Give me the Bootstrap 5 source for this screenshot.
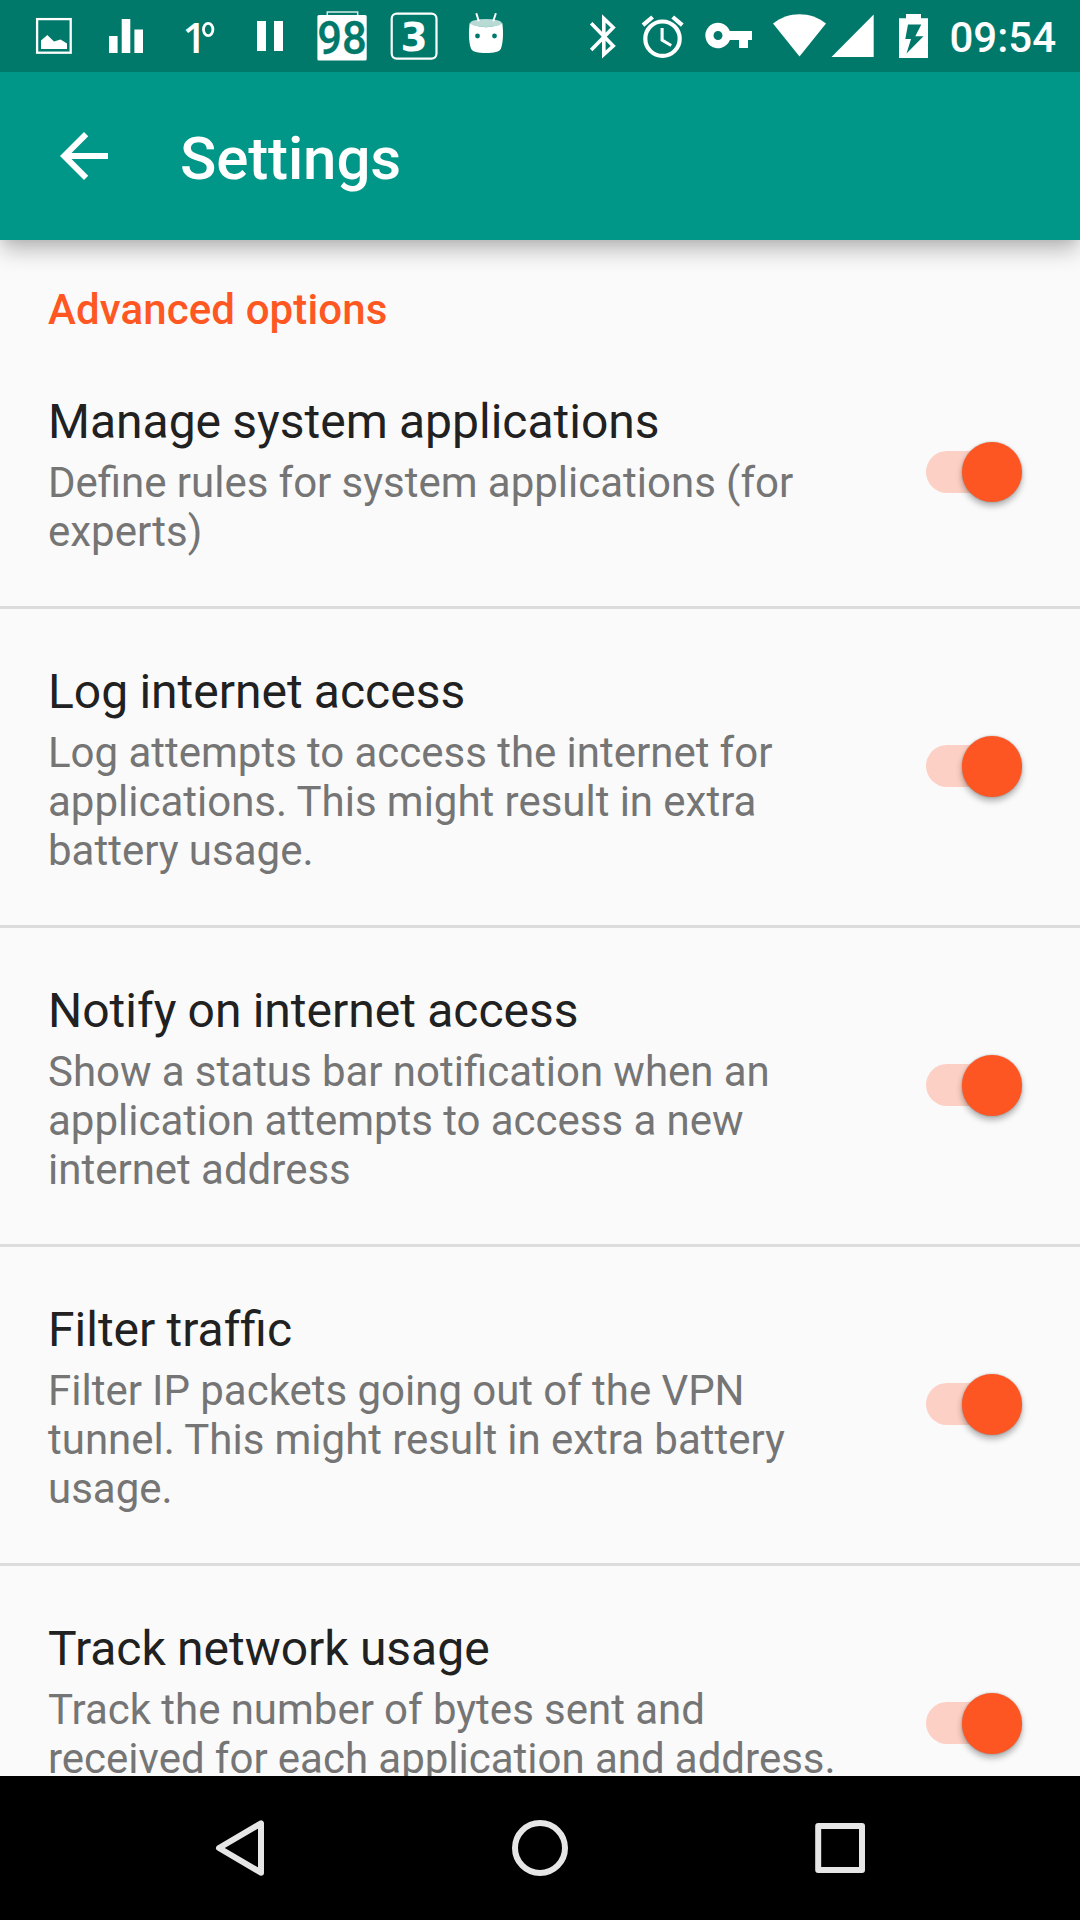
<!DOCTYPE html>
<html lang="en">
<head>
<meta charset="utf-8">
<meta name="viewport" content="width=device-width, initial-scale=1">
<title>Settings</title>
<link href="https://cdn.jsdelivr.net/npm/bootstrap@5.3.0/dist/css/bootstrap.min.css" rel="stylesheet">
<style>
  body { font-family: Roboto, "Noto Sans", sans-serif; background: #fafafa; color: #212121; }
  .screen { width: 1080px; height: 1920px; }
  .status-bar { height: 72px; background: #00796b; padding-left: 18px; padding-right: 24px; }
  .clock { width: 114px; height: 72px; font-size: 42px; font-weight: 500; line-height: 72px; padding-top: 2px; }
  .app-bar { height: 168px; background: #009688; padding-left: 48px; }
  .app-title { font-size: 60px; font-weight: 500; line-height: 70px; letter-spacing: -.12px; margin-left: 60px; padding-top: 5px; }
  .prefs { position: relative; }
  .bar-shadow { position: absolute; top: 0; left: 0; right: 0; height: 60px; overflow: hidden; }
  .bar-shadow::before { content: ""; position: absolute; left: 2px; right: 2px; top: -60px; height: 60px; box-shadow: 0 10px 22px rgba(0,0,0,.26), 0 3px 9px rgba(0,0,0,.06); }
  .section-title { font-size: 42px; font-weight: 500; line-height: 50px; letter-spacing: .12px; color: #ff5722; padding: 45px 48px 4px; height: 99px; }
  .pref { padding: 55px 88px 47px 48px; border-bottom: 3px solid #dcdcdc; }
  .pref-title { font-size: 48px; line-height: 56px; height: 58px; word-spacing: -.7px; }
  .pref-note { font-size: 42px; line-height: 49px; color: #757575; margin: 6px 0 3px; white-space: nowrap; word-spacing: -.2px; }
  .form-check-input.pref-switch { width: 66px; height: 42px; margin: 0 0 10px; border: 0; border-radius: 21px 0 0 21px; background: #fcd0c4; position: relative; opacity: 1; }
  .pref-switch::after { content: ""; position: absolute; left: 35.5px; top: -9px; width: 60.500px; height: 60.500px; border-radius: 50%; background: #fd5622; box-shadow: 0 0 2px rgba(0,0,0,.25), 0 4px 6px rgba(0,0,0,.3); }
  .nav-keys { height: 144px; background: #000; padding: 0 90px; }
</style>
<script src="https://cdn.jsdelivr.net/npm/bootstrap@5.3.0/dist/js/bootstrap.bundle.min.js"></script>
</head>
<body>
<div class="screen d-flex flex-column overflow-hidden">

  <div class="status-bar d-flex text-white flex-shrink-0">
    <svg width="72" height="72" viewBox="18 0 72 72" fill="#fff"><rect x="37.1" y="19.1" width="33.6" height="33.6" fill="none" stroke="#fff" stroke-width="2.3"/><path d="M41 49V40.5L47.300 35 54 41.500 60.500 39.500 67 43.500V49Z"/></svg>
    <svg width="72" height="72" viewBox="90 0 72 72" fill="#fff"><path d="M109 36h8.600v17H109zM121.700 19h8.600v34h-8.600zM134.400 29.500h8.600V53h-8.600z"/></svg>
    <svg width="72" height="72" viewBox="162 0 72 72" fill="#fff"><text x="182.500" y="53" font-family="Open Sans" font-weight="600" font-size="42">1</text><ellipse cx="208.200" cy="29.500" rx="4.700" ry="6.200" fill="none" stroke="#fff" stroke-width="2.800"/></svg>
    <svg width="72" height="72" viewBox="234 0 72 72" fill="#fff"><path d="M257 21h9v30h-9zM274 21h9v30h-9z"/></svg>
    <svg width="72" height="72" viewBox="306 0 72 72"><path d="M327.300 15V12h30.400v3" fill="none" stroke="#d5eae7" stroke-width="1.500"/><rect x="317.400" y="15" width="49.300" height="45.600" rx="1.500" fill="#fff"/><text x="317.300" y="54" font-family="Roboto" font-weight="500" font-size="46.500" textLength="49.500" lengthAdjust="spacingAndGlyphs" fill="#00796b" stroke="#00796b" stroke-width=".3">98</text></svg>
    <svg width="72" height="72" viewBox="378 0 72 72"><rect x="391.700" y="13.600" width="44.800" height="45" rx="5" fill="none" stroke="#fff" stroke-width="2.200"/><text x="400.500" y="50.500" font-family="DejaVu Sans" font-weight="700" font-size="39" fill="#fff">3</text></svg>
    <svg width="72" height="72" viewBox="450 0 72 72"><path d="M469.700 23C479 28.500 493 28.500 502.300 23 503.500 32 503.300 42 501 48.500 499.500 52 494 53 486 53S472.500 52 471 48.500C468.700 42 468.500 32 469.700 23Z" fill="#fff"/><ellipse cx="486" cy="23" rx="15.800" ry="4" fill="#b8dad5"/><path d="M476.300 13.300l2.500 8M495.900 13.300l-2.700 8" stroke="#fff" stroke-width="2"/><circle cx="477.500" cy="36" r="2.400" fill="#00796b"/><circle cx="494.500" cy="36" r="2.400" fill="#00796b"/></svg>

    <svg class="ms-auto" width="60" height="72" viewBox="573 0 60 72" fill="none" stroke="#fff" stroke-width="3.600"><path d="M591.200 23.300 613.200 46 603.800 54.500V18.500L613.200 27.500 591.200 50"/></svg>
    <svg width="60" height="72" viewBox="633 0 60 72" fill="none" stroke="#fff"><circle cx="662.500" cy="38.700" r="17.200" stroke-width="4.200"/><path d="M643 25.200 652.600 17M682.300 25.200 672.700 17" stroke-width="4.200"/><path d="M662.100 28V40.200L671.200 45.500" stroke-width="3.100"/></svg>
    <svg width="72" height="72" viewBox="693 0 72 72"><path fill="#fff" fill-rule="evenodd" d="M729.900 31H752V40H748V48H739V40H729.900A12.700 12.700 0 1 1 729.900 31ZM718 31A4.500 4.500 0 1 0 718 40 4.500 4.500 0 1 0 718 31Z"/></svg>
    <svg width="65" height="72" viewBox="765 0 65 72"><path fill="#fff" d="M799.500 56.500 773 23.500C788 11 811 11 826 23.500Z"/></svg>
    <svg width="52" height="72" viewBox="830 0 52 72"><path fill="#fff" d="M831.500 57H873.700V14.500Z"/></svg>
    <svg width="60" height="72" viewBox="882 0 60 72"><path fill="#fff" fill-rule="evenodd" d="M906 14H921V18.300H928V58H899V18.300H906ZM908 24.500 905.300 39H911L906.500 53.500 923.500 36.300H915.300L921.300 24.500Z"/></svg>
    <div class="clock text-end">09:54</div>
  </div>

  <header class="app-bar d-flex align-items-center text-white flex-shrink-0">
    <svg width="72" height="72" viewBox="0 0 24 24" fill="#fff"><path d="M20 11H7.830l5.590-5.590L12 4l-8 8 8 8 1.410-1.410L7.830 13H20z"/></svg>
    <h1 class="app-title mb-0">Settings</h1>
  </header>

  <main class="prefs flex-grow-1 overflow-hidden">
    <div class="bar-shadow"></div>
    <h2 class="section-title mb-0">Advanced options</h2>

    <section class="pref d-flex align-items-center justify-content-between">
      <div><div class="pref-title">Manage system applications</div>
        <p class="pref-note">Define rules for system applications (for<br>experts)</p></div>
      <input class="form-check-input pref-switch flex-shrink-0" type="checkbox" role="switch" aria-label="Manage system applications" checked>
    </section>
    <section class="pref d-flex align-items-center justify-content-between">
      <div><div class="pref-title">Log internet access</div>
        <p class="pref-note">Log attempts to access the internet for<br>applications. This might result in extra<br>battery usage.</p></div>
      <input class="form-check-input pref-switch flex-shrink-0" type="checkbox" role="switch" aria-label="Log internet access" checked>
    </section>
    <section class="pref d-flex align-items-center justify-content-between">
      <div><div class="pref-title">Notify on internet access</div>
        <p class="pref-note">Show a status bar notification when an<br>application attempts to access a new<br>internet address</p></div>
      <input class="form-check-input pref-switch flex-shrink-0" type="checkbox" role="switch" aria-label="Notify on internet access" checked>
    </section>
    <section class="pref d-flex align-items-center justify-content-between">
      <div><div class="pref-title">Filter traf&zwnj;fic</div>
        <p class="pref-note">Filter IP packets going out of the VPN<br>tunnel. This might result in extra battery<br>usage.</p></div>
      <input class="form-check-input pref-switch flex-shrink-0" type="checkbox" role="switch" aria-label="Filter traffic" checked>
    </section>
    <section class="pref d-flex align-items-center justify-content-between">
      <div><div class="pref-title">Track network usage</div>
        <p class="pref-note">Track the number of bytes sent and<br>received for each application and address.<br>&nbsp;</p></div>
      <input class="form-check-input pref-switch flex-shrink-0" type="checkbox" role="switch" aria-label="Track network usage" checked>
    </section>
  </main>

  <nav class="nav-keys d-flex flex-shrink-0">
    <svg width="300" height="144" viewBox="90 0 300 144" fill="none" stroke="#e6e6e6" stroke-width="6" stroke-linejoin="round"><path d="M261 47.300V96.700L219 72Z"/></svg>
    <svg width="300" height="144" viewBox="390 0 300 144" fill="none" stroke="#e6e6e6" stroke-width="6"><circle cx="540" cy="72" r="25"/></svg>
    <svg width="300" height="144" viewBox="690 0 300 144" fill="none" stroke="#e6e6e6" stroke-width="6" stroke-linejoin="round"><path d="M818.200 50H862V94H818.200Z"/></svg>
  </nav>
</div>
</body>
</html>
